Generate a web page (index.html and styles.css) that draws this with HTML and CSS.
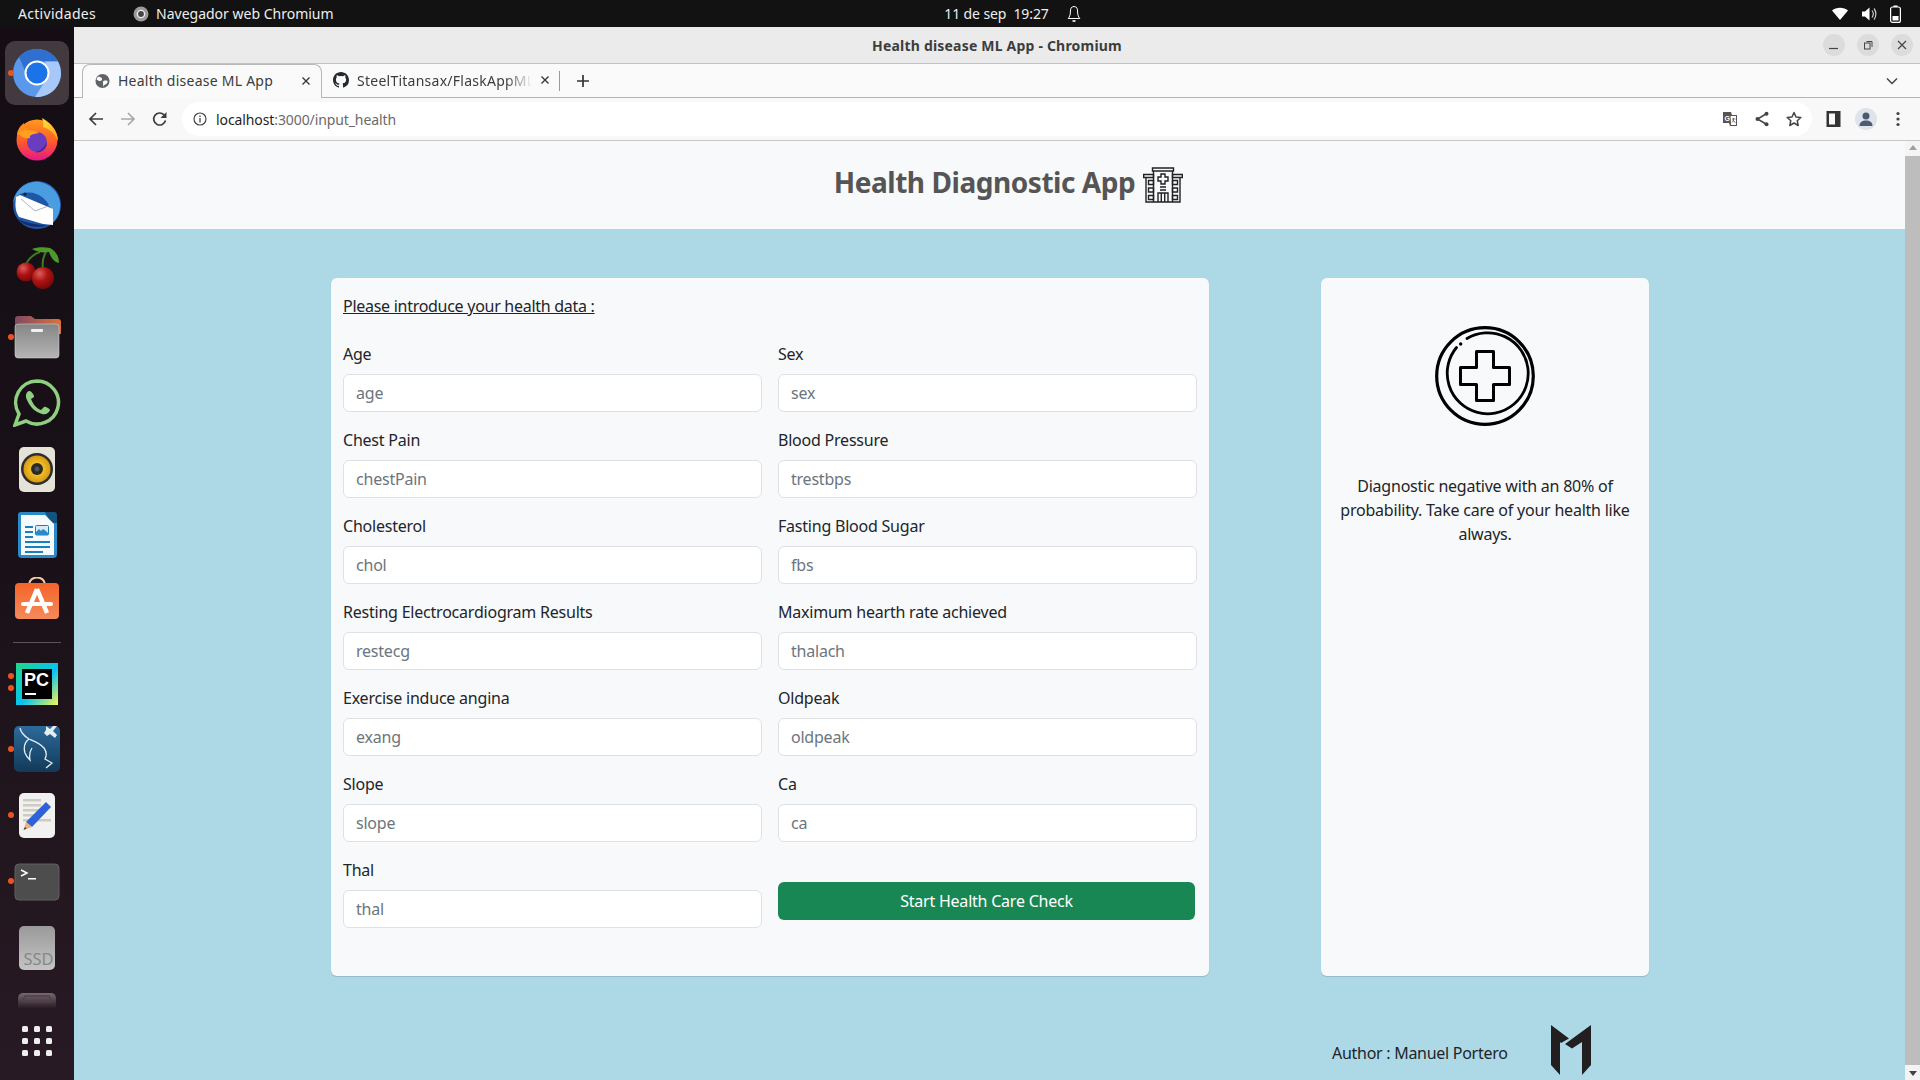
FILE: index.html
```html
<!DOCTYPE html>
<html lang="es">
<head>
<meta charset="utf-8">
<title>Health disease ML App</title>
<link rel="stylesheet" href="styles.css">
</head>
<body>
<svg class="defs" width="0" height="0" aria-hidden="true">
  <defs>
    <linearGradient id="ff" x1="0" y1="0" x2="0" y2="1"><stop offset="0" stop-color="#ff9a1c"/><stop offset=".55" stop-color="#ff5a2a"/><stop offset="1" stop-color="#e8168a"/></linearGradient>
    <linearGradient id="ffy" x1="0" y1="0" x2="1" y2="1"><stop offset="0" stop-color="#ffe13a"/><stop offset="1" stop-color="#ff9a1c"/></linearGradient>
    <linearGradient id="fold" x1="0" y1="0" x2="1" y2="0"><stop offset="0" stop-color="#7d4a63"/><stop offset="1" stop-color="#e0703a"/></linearGradient>
    <linearGradient id="foldf" x1="0" y1="0" x2="0" y2="1"><stop offset="0" stop-color="#858585"/><stop offset="1" stop-color="#b5b5b5"/></linearGradient>
    <linearGradient id="shop" x1="0" y1="0" x2="0" y2="1"><stop offset="0" stop-color="#f4642a"/><stop offset="1" stop-color="#f68a5a"/></linearGradient>
    <linearGradient id="pyc" x1="0" y1="0" x2="1" y2="1"><stop offset="0" stop-color="#21d789"/><stop offset=".55" stop-color="#07c3f2"/><stop offset="1" stop-color="#fcf84a"/></linearGradient>
    <linearGradient id="wb" x1="0" y1="0" x2="0" y2="1"><stop offset="0" stop-color="#2c6a9c"/><stop offset="1" stop-color="#123a58"/></linearGradient>
    <linearGradient id="ssd" x1="0" y1="0" x2="0" y2="1"><stop offset="0" stop-color="#9a9a9a"/><stop offset="1" stop-color="#c4c4c4"/></linearGradient>
    <linearGradient id="drv" x1="0" y1="0" x2="0" y2="1"><stop offset="0" stop-color="#77686f"/><stop offset="1" stop-color="#2b1c24"/></linearGradient>
    <radialGradient id="cher" cx=".35" cy=".3" r=".8"><stop offset="0" stop-color="#d9605c"/><stop offset=".45" stop-color="#b01212"/><stop offset="1" stop-color="#6a0606"/></radialGradient>
    <radialGradient id="spk" cx=".5" cy=".5" r=".5"><stop offset=".3" stop-color="#f7c830"/><stop offset="1" stop-color="#d89a10"/></radialGradient>
  </defs>
</svg>

<header class="topbar">
  <div class="topbar-left">
    <span class="activities">Actividades</span>
    <span class="app-name">
      <svg class="ic16" viewBox="0 0 16 16"><circle cx="8" cy="8" r="7.500" fill="#9a9a9a"/><circle cx="8" cy="8" r="3.600" fill="#444" stroke="#eee" stroke-width="1.400"/></svg>
      Navegador web Chromium
    </span>
  </div>
  <div class="topbar-center">
    <span class="clock">11 de sep&nbsp; 19:27</span>
    <svg class="bell" viewBox="0 0 14 18" fill="none" stroke="#fff" stroke-width="1"><path d="M7 1.500c-3 0-3.600 2.400-3.600 5.500 0 3-1 5-2.200 6.500h11.600c-1.200-1.500-2.200-3.500-2.200-6.500 0-3.100-.6-5.500-3.600-5.500z"/><path d="M5.500 16h3" stroke-width="1.600"/></svg>
  </div>
  <div class="topbar-right">
    <svg class="ic16" viewBox="0 0 16 16"><path d="M0 4.500C4 .8 12 .8 16 4.500L8 14z" fill="#fff"/></svg>
    <svg class="ic16" viewBox="0 0 16 16" fill="none"><path d="M1 5.500h3L8.500 1.500v13L4 10.500H1z" fill="#fff"/><path d="M11 4.500c1.500 2 1.500 5 0 7M13 2.500c2.500 3 2.500 8 0 11" stroke="#ccc" stroke-width="1.200"/></svg>
    <svg class="ic-batt" viewBox="0 0 11 18"><rect x=".6" y="2" width="9.800" height="15.400" rx="2" fill="none" stroke="#fff" stroke-width="1.200"/><rect x="3.500" y=".5" width="4" height="1.500" fill="#fff"/><rect x="2.500" y="11" width="6" height="4.500" fill="#fff"/></svg>
  </div>
</header>

<div class="desktop">
  <nav class="dock">
    <div class="dock-item dock-active">
      <span class="dot dot-one"></span>
      <svg class="dock-ic" viewBox="0 0 48 48"><circle cx="24" cy="24" r="24" fill="#5a98ec"/><path d="M45 12.500A24 24 0 0 0 6 8L14 26l10-13.500z" fill="#2f6fd0"/><path d="M45 12.500A24 24 0 0 1 22 48L34 29l-2-16.500z" fill="#a8c8fa"/><circle cx="24" cy="24" r="11.500" fill="#1a73e8" stroke="#fff" stroke-width="2"/></svg>
    </div>
    <div class="dock-item">
      <svg class="dock-ic" viewBox="0 0 48 48"><circle cx="24" cy="25" r="20.500" fill="url(#ff)"/><path d="M29 3c9 5 16 13 16 23-4-9-9-12-15-14 1-3 0-6-1-9z" fill="url(#ffy)"/><path d="M4 21c0-6 3-10 7-13 0 3 2 5 5 6-4 1-9 3-12 7z" fill="#ff8a1f"/><circle cx="24" cy="27" r="10" fill="#6a3cc0"/><path d="M5 18c5-4 14-4 21 0-6 1-10 2-9 5-5 1-9-1-12-5z" fill="#ffa01f"/><path d="M34 27c0 7-6 12-13 10 5 0 10-4 13-10z" fill="#4a2a9a"/></svg>
    </div>
    <div class="dock-item">
      <svg class="dock-ic" viewBox="0 0 48 48"><circle cx="24" cy="24" r="24" fill="#1f56a8"/><path d="M0 22C2 8 14-1 27 1c10 2 18 9 20 20 1 8-2 17-9 22 2-6 2-12-1-17-3-7-12-17-27-14C5 13 2 17 0 22z" fill="#4a9de0"/><path d="M3 16l4-2 33 14v16L30 43 6 36C2 30 2 24 3 16z" fill="#fff"/><path d="M8 18l14 12 16-6" fill="none" stroke="#9a9fb0" stroke-width=".8"/><path d="M4 38c8 8 22 10 30 6-10 0-20-2-30-6z" fill="#132c6e"/><circle cx="12" cy="13" r="1.600" fill="#123"/></svg>
    </div>
    <div class="dock-item">
      <svg class="dock-ic" viewBox="0 0 48 48"><path d="M13 17C16 11 21 7 27 5M30 22c-1-6 0-12 3-17" fill="none" stroke="#3e7d1c" stroke-width="2"/><path d="M19 2c5-2 12-2 18-1 5 3 9 7 9 15-5-1-8-5-10-11-6 1-12 0-17-3z" fill="#4d9a2a"/><circle cx="13" cy="25" r="9.500" fill="url(#cher)"/><circle cx="30" cy="31" r="11" fill="url(#cher)"/></svg>
    </div>
    <div class="dock-item">
      <span class="dot dot-one"></span>
      <svg class="dock-ic" viewBox="0 0 48 48"><path d="M2 6a3 3 0 0 1 3-3h13l4 3h23a3 3 0 0 1 3 3v12H2z" fill="url(#fold)"/><rect x="2" y="11" width="44" height="34" rx="3" fill="url(#foldf)" stroke="#d0d0d0" stroke-width=".6"/><rect x="18" y="16" width="12" height="3" rx="1" fill="#f0f0f0"/></svg>
    </div>
    <div class="dock-item">
      <svg class="dock-ic" viewBox="0 0 48 48" fill="none"><path d="M24 2a21.500 21.500 0 1 1-11 40L2 46l4-11A21.500 21.500 0 0 1 24 2z" stroke="#8fcf80" stroke-width="3.500"/><path d="M16 12c-3 1-4 5-2 9 3 7 8 12 15 14 4 1 7-1 8-4 0-1-5-4-6-3l-3 3c-5-2-8-6-10-11l3-2c1-1-3-7-5-6z" fill="#8fcf80"/></svg>
    </div>
    <div class="dock-item">
      <svg class="dock-ic" viewBox="0 0 48 48"><rect x="6" y="2" width="36" height="45" rx="5" fill="#e5e2d8"/><circle cx="24" cy="24" r="16" fill="#2e2c2c"/><circle cx="24" cy="24" r="13.500" fill="url(#spk)"/><circle cx="24" cy="24" r="6" fill="#2b2a28"/><circle cx="24" cy="24" r="2.500" fill="#555"/></svg>
    </div>
    <div class="dock-item">
      <svg class="dock-ic" viewBox="0 0 48 48"><path d="M8 1h24l12 11v31a4 4 0 0 1-4 4H9a4 4 0 0 1-4-4V4a3 3 0 0 1 3-3z" fill="#2a8ac8"/><path d="M32 1h9a3 3 0 0 1 3 3v8H38z" fill="#13537e"/><path d="M8 4h24l9 9v31H8z" fill="#f4fafd"/><g fill="#1b7fbd"><rect x="12" y="15" width="8" height="2"/><rect x="12" y="20" width="8" height="2"/><rect x="12" y="25" width="8" height="2"/><rect x="12" y="30" width="25" height="2"/><rect x="12" y="35" width="25" height="2"/><rect x="12" y="40" width="18" height="2"/></g><rect x="22.500" y="14.500" width="13" height="9.500" rx="1" fill="#d8eaf6" stroke="#1b7fbd"/><path d="M23 24v-3l3-3 2 2 2-2 3 2 2 2v2z" fill="#2a8ac8"/></svg>
    </div>
    <div class="dock-item">
      <svg class="dock-ic" viewBox="0 0 48 48"><path d="M16 8c0-10 16-10 16 0" fill="none" stroke="#f2c9a0" stroke-width="2"/><rect x="2" y="6" width="44" height="36" rx="4" fill="url(#shop)"/><path d="M24 12L14 36M24 12l10 24" stroke="#fff" stroke-width="4.500"/><rect x="8" y="25" width="32" height="4" rx="2" fill="#fff"/></svg>
    </div>
    <div class="dock-sep"></div>
    <div class="dock-item">
      <span class="dot dot-top"></span><span class="dot dot-bot"></span>
      <svg class="dock-ic" viewBox="0 0 48 48"><rect x="3" y="4" width="42" height="42" fill="url(#pyc)"/><rect x="9" y="10" width="30" height="30" fill="#000"/><text x="11" y="27" class="pc-text">PC</text><rect x="12" y="34" width="11" height="2" fill="#fff"/></svg>
    </div>
    <div class="dock-item">
      <span class="dot dot-one"></span>
      <svg class="dock-ic" viewBox="0 0 48 48"><rect x="1" y="1" width="46" height="46" rx="5" fill="url(#wb)"/><path d="M7 3c1 5 4 8 9 11 5 2 11 4 15 9 3 4 3 7 1 11l7 4-6 5M16 14c-4 3-6 7-4 14 1 3 3 5 5 7-1-5 0-9 2-12" fill="none" stroke="#e4edf2" stroke-width="1.300"/><path d="M33 1l4 3 3-3h4l-4 5 4 4-2 3-5-4-3 2-3-3 2-3z" fill="#e4edf2"/></svg>
    </div>
    <div class="dock-item">
      <span class="dot dot-one"></span>
      <svg class="dock-ic" viewBox="0 0 48 48"><rect x="6" y="2" width="36" height="45" rx="5" fill="#f1f1f0"/><g fill="#cfcbbf"><rect x="10" y="8" width="18" height="2.500"/><rect x="10" y="13" width="18" height="2.500"/><rect x="10" y="18" width="18" height="2.500"/><rect x="10" y="23" width="14" height="2.500"/><rect x="10" y="28" width="8" height="2.500"/><rect x="22" y="28" width="16" height="2.500"/></g><path d="M33 11l5 5-19 20-6-5z" fill="#2f62d8"/><path d="M13 31l6 5-8.500 3z" fill="#e8b27e"/><path d="M10.500 39l1.500-3 1.500 1.500z" fill="#333"/></svg>
    </div>
    <div class="dock-item">
      <span class="dot dot-one"></span>
      <svg class="dock-ic" viewBox="0 0 48 48"><rect x="2" y="7" width="44" height="36" rx="4" fill="#4d4d4d" stroke="#606060"/><path d="M8 13l6 3-6 3" fill="none" stroke="#fff" stroke-width="1.500"/><rect x="15" y="21" width="8" height="1.500" fill="#fff"/></svg>
    </div>
    <div class="dock-item">
      <svg class="dock-ic" viewBox="0 0 48 48"><rect x="6" y="3" width="36" height="44" rx="5" fill="url(#ssd)"/><text x="10.500" y="42" class="ssd-text">SSD</text></svg>
    </div>
    <div class="dock-item dock-cut">
      <svg class="dock-ic-cut" viewBox="0 0 48 16"><path d="M5 16V6a5 5 0 0 1 5-5h28a5 5 0 0 1 5 5v10z" fill="url(#drv)"/><path d="M9 10l3-6h24l3 6z" fill="none" stroke="#4e4249" stroke-width="1.500"/></svg>
    </div>
    <div class="dock-item">
      <div class="app-grid"><i></i><i></i><i></i><i></i><i></i><i></i><i></i><i></i><i></i></div>
    </div>
  </nav>

  <div class="window">
    <div class="titlebar">
      <span class="wintitle">Health disease ML App - Chromium</span>
      <div class="winbtns">
        <span class="winbtn"><svg class="ic10" viewBox="0 0 10 10"><path d="M0 8.500h9" stroke="#444" stroke-width="1.200"/></svg></span>
        <span class="winbtn"><svg class="ic10" viewBox="0 0 10 10" fill="none" stroke="#444"><rect x="1.500" y="3" width="5.500" height="6"/><path d="M3.500 1.500H9V7"/></svg></span>
        <span class="winbtn"><svg class="ic10" viewBox="0 0 10 10"><path d="M1 1l8 8M9 1l-8 8" stroke="#444" stroke-width="1.200"/></svg></span>
      </div>
    </div>

    <div class="tabbar">
      <div class="tab tab-active">
        <svg class="ic15" viewBox="0 0 16 16"><circle cx="8" cy="8" r="7.500" fill="#5f6368"/><path d="M3 3.500c2 0 4 .5 4.500 2S6 8 5 8 3 7 1.500 6M9 15c0-2 1-3 2.500-3.500s2-2 2-3-1.500-1-3-1-2.500 1-2 2.500" fill="#fafafa"/></svg>
        <span class="tab-title">Health disease ML App</span>
        <svg class="tab-x" viewBox="0 0 10 10"><path d="M1.500 1.500l7 7M8.500 1.500l-7 7" stroke="#333" stroke-width="1.300"/></svg>
      </div>
      <div class="tab">
        <svg class="ic16" viewBox="0 0 16 16"><path fill="#24292f" d="M8 0C3.580 0 0 3.580 0 8c0 3.540 2.290 6.530 5.470 7.590.4.070.55-.17.55-.38v-1.340c-2.230.48-2.700-1.070-2.700-1.070-.36-.92-.89-1.170-.89-1.170-.73-.5.050-.49.050-.49.800.060 1.230.830 1.230.830.720 1.220 1.870.870 2.330.660.070-.520.280-.870.510-1.070-1.780-.2-3.640-.890-3.640-3.950 0-.870.310-1.590.820-2.150-.08-.2-.36-1.020.080-2.120 0 0 .670-.210 2.200.820a7.600 7.600 0 0 1 4 0c1.530-1.040 2.200-.820 2.200-.820.440 1.100.160 1.920.080 2.120.510.560.820 1.270.820 2.150 0 3.070-1.870 3.750-3.650 3.950.290.250.540.730.540 1.480v2.200c0 .210.150.460.550.380A8 8 0 0 0 16 8c0-4.420-3.580-8-8-8z"/></svg>
        <span class="tab-title tab-fade">SteelTitansax/FlaskAppML</span>
        <svg class="tab-x" viewBox="0 0 10 10"><path d="M1.500 1.500l7 7M8.500 1.500l-7 7" stroke="#333" stroke-width="1.300"/></svg>
      </div>
      <span class="tab-div"></span>
      <svg class="newtab" viewBox="0 0 14 14"><path d="M7 1v12M1 7h12" stroke="#333" stroke-width="1.700"/></svg>
      <svg class="tab-chev" viewBox="0 0 12 8" fill="none"><path d="M1 1.500l5 5 5-5" stroke="#444" stroke-width="1.500"/></svg>
    </div>

    <div class="toolbar">
      <div class="navbtns">
        <svg class="ic16" viewBox="0 0 16 16" fill="none" stroke="#3c3c3c" stroke-width="1.700"><path d="M15 8H2M8 2L2 8l6 6"/></svg>
        <svg class="ic16" viewBox="0 0 16 16" fill="none" stroke="#a8a8a8" stroke-width="1.700"><path d="M1 8h13M8 2l6 6-6 6"/></svg>
        <svg class="ic16" viewBox="0 0 16 16" fill="none"><path d="M13.500 9.500A6 6 0 1 1 12 3.800" stroke="#3c3c3c" stroke-width="1.700"/><path d="M14.500 1v6h-6z" fill="#3c3c3c"/></svg>
      </div>
      <div class="omnibox">
        <svg class="ic14" viewBox="0 0 14 14" fill="none"><circle cx="7" cy="7" r="6" stroke="#444" stroke-width="1.200"/><path d="M7 6v4.500M7 3.500v1.500" stroke="#444" stroke-width="1.300"/></svg>
        <span class="url"><span class="url-host">localhost</span>:3000/input_health</span>
        <div class="omni-actions">
          <svg class="ic16" viewBox="0 0 16 16"><path d="M1 1h8l1 3h5v11H8l-1-3H1z" fill="#555"/><path d="M8 4.500h6.500v10H8.500z" fill="#fff" stroke="#555"/><text x="2.500" y="9.500" class="tr-text">G</text><path d="M10 8h3.500M11.500 7v1c0 2-1 3-1.500 3.500M11 9c.5 1.200 1.500 2 2.500 2.500" stroke="#555" stroke-width=".8" fill="none"/></svg>
          <svg class="ic16" viewBox="0 0 16 16" fill="#444"><path d="M12 3L3.500 8l8.500 5" fill="none" stroke="#444" stroke-width="1.500"/><circle cx="12.500" cy="2.800" r="2"/><circle cx="3.500" cy="8" r="2"/><circle cx="12.500" cy="13.200" r="2"/></svg>
          <svg class="ic16" viewBox="0 0 16 16" fill="none"><path d="M8 1.500l2 4.500 4.800.5-3.600 3.200 1 4.800L8 12l-4.200 2.500 1-4.800L1.200 6.500 6 6z" stroke="#444" stroke-width="1.500" stroke-linejoin="round"/></svg>
        </div>
      </div>
      <div class="tool-right">
        <svg class="ic15" viewBox="0 0 14 16"><path d="M0 0h14v16H0zM2.500 2.500v11h6v-11z" fill="#333" fill-rule="evenodd"/></svg>
        <span class="avatar"><svg class="ic16" viewBox="0 0 16 16" fill="#4c5a73"><circle cx="8" cy="5" r="3.500"/><path d="M1.500 15c0-4 3-5.500 6.500-5.500S14.500 11 14.500 15z"/></svg></span>
        <svg class="kebab" viewBox="0 0 4 16" fill="#444"><circle cx="2" cy="2.500" r="1.600"/><circle cx="2" cy="8" r="1.600"/><circle cx="2" cy="13.500" r="1.600"/></svg>
      </div>
    </div>

    <div class="viewport">
      <div class="page">
        <div class="page-head">
          <h1 class="app-title">Health Diagnostic App</h1>
          <svg class="hospital" viewBox="0 0 40 36" fill="none" stroke="#222" stroke-width="1.400">
            <path d="M9.500 1h21v3h-21zM10.500 4v31M29.500 4v31"/>
            <path d="M.7 7.500h9.800v3H.7zM29.500 7.500h9.800v3h-9.800zM3 10.500V35h34V10.500M3 35h34"/>
            <path d="M18 7h4v3h3v4h-3v3h-4v-3h-3v-4h3z"/>
            <path d="M17 20h6M17 23h6M15 35V26h10v9M18.300 26v9M21.700 26v9"/>
            <path d="M5.500 13.500h5v4h-5zM5.500 21h5v4h-5zM5.500 28.500h5v4h-5zM29.500 13.500h5v4h-5zM29.500 21h5v4h-5zM29.500 28.500h5v4h-5z"/>
          </svg>
        </div>

        <main class="content">
          <form class="card form-card">
            <p class="form-intro">Please introduce your health data :</p>
            <div class="form-grid">
              <div class="field"><label class="lbl">Age</label><input class="inp" placeholder="age"></div>
              <div class="field"><label class="lbl">Sex</label><input class="inp" placeholder="sex"></div>
              <div class="field"><label class="lbl">Chest Pain</label><input class="inp" placeholder="chestPain"></div>
              <div class="field"><label class="lbl">Blood Pressure</label><input class="inp" placeholder="trestbps"></div>
              <div class="field"><label class="lbl">Cholesterol</label><input class="inp" placeholder="chol"></div>
              <div class="field"><label class="lbl">Fasting Blood Sugar</label><input class="inp" placeholder="fbs"></div>
              <div class="field"><label class="lbl">Resting Electrocardiogram Results</label><input class="inp" placeholder="restecg"></div>
              <div class="field"><label class="lbl">Maximum hearth rate achieved</label><input class="inp" placeholder="thalach"></div>
              <div class="field"><label class="lbl">Exercise induce angina</label><input class="inp" placeholder="exang"></div>
              <div class="field"><label class="lbl">Oldpeak</label><input class="inp" placeholder="oldpeak"></div>
              <div class="field"><label class="lbl">Slope</label><input class="inp" placeholder="slope"></div>
              <div class="field"><label class="lbl">Ca</label><input class="inp" placeholder="ca"></div>
              <div class="field"><label class="lbl">Thal</label><input class="inp" placeholder="thal"></div>
              <button class="submit" type="button">Start Health Care Check</button>
            </div>
          </form>

          <aside class="card result-card">
            <svg class="medical" viewBox="0 0 100 100" fill="none" stroke="#000">
              <circle cx="50" cy="50" r="48.300" stroke-width="3.200"/>
              <path d="M32 12.500A40.500 40.500 0 1 1 21.500 21.500" stroke-width="2.800" stroke-linecap="round"/>
              <circle cx="25.700" cy="18" r="1.700" fill="#000" stroke="none"/>
              <path d="M41.500 25.500h17v16h16v17h-16v16h-17v-16h-16v-17h16z" stroke-width="3" stroke-linejoin="round"/>
            </svg>
            <p class="result-text">Diagnostic negative with an 80% of probability. Take care of your health like always.</p>
          </aside>
        </main>

        <footer class="page-foot">
          <span class="author">Author : Manuel Portero</span>
          <svg class="logo" viewBox="0 0 40 50" fill="#231f20"><path d="M0 0l18 13.500-8 4.500-1-1v33L0 40z"/><path d="M40 0v40l-9 10V17l-10 6.500-7-4.500z"/></svg>
        </footer>
      </div>
      <div class="scrollbar">
        <span class="arrow-up"></span>
        <span class="thumb"></span>
        <span class="arrow-down"></span>
      </div>
    </div>
  </div>
</div>
</body>
</html>
```

FILE: styles.css
```css
* { box-sizing: border-box; }
html, body { height: 100%; }
body {
  margin: 0;
  width: 1920px;
  height: 1080px;
  overflow: hidden;
  display: flex;
  flex-direction: column;
  font-family: "Noto Sans", "Open Sans", sans-serif;
  font-size: 16px;
  color: #212529;
  background: #add8e6;
}
.defs { position: absolute; }
svg { display: block; flex: none; }
.ic10 { width: 10px; height: 10px; }
.ic14 { width: 14px; height: 14px; }
.ic15 { width: 15px; height: 16px; }
.ic16 { width: 16px; height: 16px; }

/* GNOME top bar */
.topbar {
  height: 27px;
  flex: none;
  background: #121212;
  color: #eee;
  font-size: 14px;
  display: grid;
  grid-template-columns: 1fr auto 1fr;
  align-items: center;
  padding: 0 19px 0 18px;
}
.topbar-left { display: flex; align-items: center; gap: 37px; }
.activities { letter-spacing: .3px; }
.app-name { display: flex; align-items: center; gap: 7px; }
.topbar-center { display: flex; align-items: center; gap: 18px; margin-left: 106px; }
.clock { color: #eee; letter-spacing: -.1px; }
.bell { width: 14px; height: 18px; }
.topbar-right { display: flex; justify-content: flex-end; align-items: center; gap: 13px; }
.ic-batt { width: 11px; height: 18px; }

/* Dock */
.desktop { flex: 1; display: flex; min-height: 0; }
.dock {
  width: 74px;
  flex: none;
  padding-top: 13px;
  background: linear-gradient(180deg, #140d14 0%, #1a1118 50%, #281a24 100%);
  display: flex;
  flex-direction: column;
  align-items: center;
}
.dock-item {
  position: relative;
  width: 64px;
  height: 66px;
  flex: none;
  display: flex;
  align-items: center;
  justify-content: center;
}
.dock-active::before {
  content: "";
  position: absolute;
  inset: 1px 0;
  background: #423a3f;
  border-radius: 10px;
}
.dock-ic { position: relative; width: 48px; height: 48px; }
.dock-cut { height: 28px; align-items: flex-end; }
.dock-ic-cut { width: 48px; height: 16px; }
.dock-sep { width: 48px; height: 16px; flex: none; position: relative; }
.dock-sep::after {
  content: "";
  position: absolute;
  left: 0; right: 0; top: 8px;
  height: 1px;
  background: #5c5459;
}
.dot {
  position: absolute;
  left: 3px;
  width: 6px;
  height: 6px;
  border-radius: 50%;
  background: #e95420;
  z-index: 1;
}
.dot-one { top: 30px; }
.dot-top { top: 23px; }
.dot-bot { top: 35px; }
.pc-text { font: 700 18px "Liberation Sans", sans-serif; fill: #fff; }
.ssd-text { font: 400 16.500px "Noto Sans", sans-serif; fill: #888; }
.tr-text { font: 700 7px "Liberation Sans", sans-serif; fill: #fff; }
.app-grid {
  display: grid;
  grid-template-columns: repeat(3, 6px);
  gap: 6px;
}
.app-grid i { width: 6px; height: 6px; border-radius: 1.500px; background: #eee; }

/* Browser window */
.window { flex: 1; min-width: 0; display: flex; flex-direction: column; }
.titlebar {
  height: 37px;
  flex: none;
  background: #ebebeb;
  border-bottom: 1px solid #c2c2c2;
  position: relative;
  display: flex;
  align-items: center;
  justify-content: center;
}
.wintitle { font-size: 14px; font-weight: 700; color: #3d3d3d; letter-spacing: .2px; }
.winbtns {
  position: absolute;
  right: 7px;
  top: 7px;
  display: flex;
  gap: 12px;
}
.winbtn {
  width: 22px;
  height: 22px;
  border-radius: 50%;
  background: #dcdcdc;
  display: flex;
  align-items: center;
  justify-content: center;
}

.tabbar {
  height: 34px;
  flex: none;
  background: #fafafa;
  border-bottom: 1px solid #b4b4b4;
  display: flex;
  align-items: stretch;
  padding-left: 8px;
  font-size: 14px;
  color: #3c3c3c;
}
.tab {
  width: 240px;
  height: 34px;
  display: flex;
  align-items: center;
  gap: 8px;
  padding: 0 10px 2px 13px;
}
.tab-active {
  background: #fafafa;
  border: 1px solid #b8b8b8;
  border-bottom: 0;
  border-radius: 8px 8px 0 0;
  height: 34px;
  position: relative;
  margin-right: -2px;
  padding-left: 12px;
}
.tab-title { flex: 1; min-width: 0; white-space: nowrap; overflow: hidden; letter-spacing: .25px; }
.tab-fade {
  -webkit-mask-image: linear-gradient(90deg, #000 85%, transparent 100%);
  mask-image: linear-gradient(90deg, #000 85%, transparent 100%);
}
.tab-x { width: 10px; height: 10px; flex: none; }
.tab-div { width: 1px; height: 20px; background: #9a9a9a; align-self: center; margin-left: -1px; }
.newtab { width: 14px; height: 14px; align-self: center; margin-left: 16px; }
.tab-chev { width: 12px; height: 8px; align-self: center; margin-left: auto; margin-right: 22px; }

.toolbar {
  height: 43px;
  flex: none;
  background: #f8f8f8;
  border-bottom: 1px solid #c8c8c8;
  display: flex;
  align-items: center;
  padding: 0 20px 0 14px;
}
.navbtns { display: flex; gap: 16px; width: 94px; flex: none; }
.omnibox {
  flex: 1;
  height: 34px;
  background: #fff;
  border-radius: 17px;
  display: flex;
  align-items: center;
  padding: 0 10px 0 11px;
  gap: 9px;
  font-size: 14px;
  color: #6a6a6a;
}
.url { letter-spacing: -.1px; }
.url-host { color: #1f1f1f; }
.omni-actions { margin-left: auto; display: flex; align-items: center; gap: 16px; }
.tool-right { display: flex; align-items: center; margin-left: 14px; gap: 14px; }
.avatar {
  width: 22px;
  height: 22px;
  border-radius: 50%;
  background: #dfe3ea;
  display: flex;
  align-items: center;
  justify-content: center;
}
.kebab { width: 4px; height: 16px; margin-left: 5px; }

/* Page */
.viewport { flex: 1; min-height: 0; display: flex; }
.page { flex: 1; min-width: 0; overflow: hidden; background: #add8e6; letter-spacing: -.22px; }
.page-head {
  height: 88px;
  background: #f8f9fa;
  display: flex;
  align-items: center;
  justify-content: center;
  gap: 8px;
  padding: 0 2px 5px 40px;
}
.app-title { margin: 0; font-size: 28px; font-weight: 700; color: #555; line-height: 1.2; letter-spacing: -.45px; }
.hospital { width: 40px; height: 36px; margin-top: 4px; }

.content {
  display: grid;
  grid-template-columns: 878px 328px;
  justify-content: space-between;
  padding: 49px 256px 0 257px;
}
.card {
  background: #f8f9fa;
  border-radius: 6px;
  box-shadow: 0 1px 1px rgba(0, 0, 0, .15);
}
.form-card { padding: 16px 12px 48px; height: 698px; }
.form-intro { margin: 0 0 24px; line-height: 24px; text-decoration: underline; letter-spacing: -.28px; }
.form-grid {
  display: grid;
  grid-template-columns: 1fr 1fr;
  gap: 16px;
}
.field { display: flex; flex-direction: column; gap: 8px; }
.lbl { line-height: 24px; }
.inp {
  width: 100%;
  height: 38px;
  padding: 6px 12px;
  background: #fff;
  border: 1px solid #dee2e6;
  border-radius: 6px;
  font: inherit;
  letter-spacing: inherit;
  color: #212529;
}
.inp::placeholder { color: #6c757d; opacity: 1; }
.submit {
  align-self: end;
  margin: 0 2px 8px 0;
  height: 38px;
  background: #198754;
  color: #fff;
  border: 0;
  border-radius: 6px;
  font: inherit;
  letter-spacing: inherit;
}
.result-card {
  padding: 48px 12px;
  display: flex;
  flex-direction: column;
  align-items: center;
  gap: 48px;
}
.medical { width: 100px; height: 100px; }
.result-text { margin: 0; text-align: center; line-height: 24px; }

.page-foot {
  display: flex;
  align-items: flex-end;
  padding: 49px 0 0 1258px;
  gap: 43px;
}
.author { line-height: 24px; margin-bottom: 10px; white-space: nowrap; letter-spacing: -.28px; }
.logo { width: 40px; height: 50px; }

.scrollbar {
  width: 15px;
  flex: none;
  background: #f4f4f4;
  display: flex;
  flex-direction: column;
  align-items: center;
}
.thumb { flex: 1; background: #bdbdbd; margin: 2px 0; width: 100%; }
.arrow-up, .arrow-down { width: 0; height: 0; margin: 4px 0; border-left: 4px solid transparent; border-right: 4px solid transparent; }
.arrow-up { border-bottom: 5px solid #a0a0a0; }
.arrow-down { border-top: 5px solid #444; }
```
